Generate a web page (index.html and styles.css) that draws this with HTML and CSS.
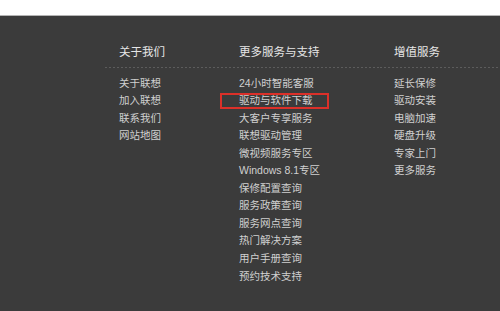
FILE: index.html
```html
<!DOCTYPE html>
<html lang="zh-CN">
<head>
<meta charset="utf-8">
<link rel="stylesheet" href="styles.css">
</head>
<body>
<div class="topbar"></div>
<footer class="footer">
  <div class="grid">
    <h3 class="head">关于我们</h3>
    <h3 class="head">更多服务与支持</h3>
    <h3 class="head">增值服务</h3>
    <ul class="list">
      <li>关于联想</li>
      <li>加入联想</li>
      <li>联系我们</li>
      <li>网站地图</li>
    </ul>
    <ul class="list">
      <li>24小时智能客服</li>
      <li class="marked">驱动与软件下载<span class="redbox"></span></li>
      <li>大客户专享服务</li>
      <li>联想驱动管理</li>
      <li>微视频服务专区</li>
      <li>Windows 8.1专区</li>
      <li>保修配置查询</li>
      <li>服务政策查询</li>
      <li>服务网点查询</li>
      <li>热门解决方案</li>
      <li>用户手册查询</li>
      <li>预约技术支持</li>
    </ul>
    <ul class="list">
      <li>延长保修</li>
      <li>驱动安装</li>
      <li>电脑加速</li>
      <li>硬盘升级</li>
      <li>专家上门</li>
      <li>更多服务</li>
    </ul>
  </div>
</footer>
</body>
</html>
```
FILE: styles.css
```css
html, body {
  margin: 0;
  padding: 0;
  height: 100%;
  background: #3b3b3b;
}
body {
  font-family: "Liberation Sans", "Noto Sans CJK SC", sans-serif;
  overflow: hidden;
}
.topbar {
  height: 15px;
  background: #ffffff;
  border-bottom: 1px solid #b4b4b4;
}
.footer {
  background: #3b3b3b;
  padding: 26px 0 0 105px;
  height: 270px;
}
.grid {
  display: grid;
  grid-template-columns: 120px 155px 1fr;
}
.head {
  margin: 0;
  padding: 0 0 6px 14px;
  font-size: 11.5px;
  line-height: 20px;
  font-weight: normal;
  color: #e6e6e6;
  border-bottom: 1px solid transparent;
  background: repeating-linear-gradient(to right, #5c5c5c 0 2px, transparent 2px 4px) bottom left / 100% 1px no-repeat;
}
.list {
  list-style: none;
  margin: 0;
  padding: 5.5px 0 0 14px;
}
.list li {
  font-size: 10.5px;
  line-height: 17.55px;
  color: #d0d0d0;
  white-space: nowrap;
}
.marked {
  position: relative;
}
.redbox {
  position: absolute;
  left: -19px;
  top: 1px;
  width: 109px;
  height: 16px;
  box-sizing: border-box;
  border: 2px solid #dc3029;
}
```
